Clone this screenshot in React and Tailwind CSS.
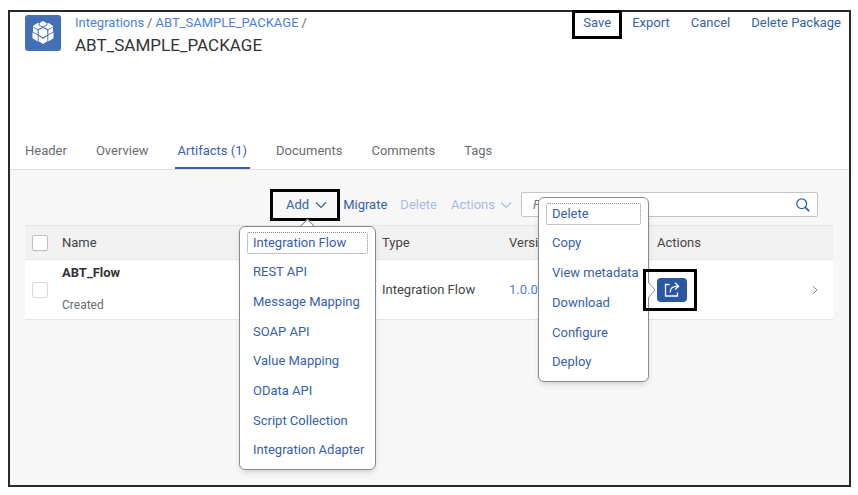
import React, { useState } from 'react';

const tabs = ['Header', 'Overview', 'Artifacts (1)', 'Documents', 'Comments', 'Tags'];

const addOptions = [
    'Integration Flow', 'REST API', 'Message Mapping', 'SOAP API',
    'Value Mapping', 'OData API', 'Script Collection', 'Integration Adapter'
];

const rowOptions = ['Delete', 'Copy', 'View metadata', 'Download', 'Configure', 'Deploy'];

const PackageLogo = () => (
    <svg viewBox="0 0 36 36" className="w-9 h-9 shrink-0" aria-hidden="true">
        <rect width="36" height="36" rx="3" fill="#4270b8" />
        <path
            d="M18 6.5 L21.5 8.5 L24 8.8 L27.5 11 V16.5 L28 18 V23 L24 25.6 L21.5 26.2 L18 28.5 L14.5 26.2 L12 25.6 L8 23 V18 L8.5 16.5 V11 L12 8.8 L14.5 8.5 Z"
            fill="#fff" stroke="#fff" strokeLinejoin="round"
        />
        <g fill="none" stroke="#4270b8" strokeLinejoin="round">
            <path d="M18 12.2 L22.8 14.8 V20.2 L18 23 L13.2 20.2 V14.8 Z" strokeWidth="1.1" />
            <path d="M14.2 8 V10.2 L18 12.2 L21.8 10.2 V8" strokeWidth="0.9" />
            <path d="M8.5 12.2 L13.2 14.8 M27.5 12.2 L22.8 14.8 M7.5 17.2 L13.2 19.8 M28.5 17.2 L22.8 19.8 M13.2 20.2 V26 M22.8 20.2 V26 M18 23 V24" strokeWidth="0.9" />
        </g>
    </svg>
);

const ChevronDown = () => (
    <svg viewBox="0 0 12 8" className="w-3 h-2" fill="none" stroke="currentColor" strokeWidth="1.2" aria-hidden="true">
        <path d="M1 1.5 L6 6.5 L11 1.5" />
    </svg>
);

const ShareIcon = () => (
    <svg viewBox="0 0 16 16" className="w-4 h-4" fill="none" stroke="currentColor" strokeWidth="1.3" aria-hidden="true">
        <path d="M5.5 2.5 H1.5 V14 H13.5 V10.5" />
        <path d="M6.2 10.5 C6 6.5 8.5 4.2 14 4.2 M11 0.8 L14.6 4.2 L11 7.6" />
    </svg>
);

const MenuItems = ({ items }) => (
    <>
        {items.map((item, i) => (
            <li key={item} role="none">
                <button
                    role="menuitem"
                    className={`block w-full h-[22px] px-[5px] text-left whitespace-nowrap rounded-xs border ${i === 0 ? 'border-[#8a8a8a] border-dotted' : 'border-transparent'}`}
                >
                    {item}
                </button>
            </li>
        ))}
    </>
);

const App = () => {
    const [activeTab, setActiveTab] = useState('Artifacts (1)');
    const [query, setQuery] = useState('');

    return (
        <div className="min-h-screen flex pt-[10px] pb-2 pl-2 pr-[7px] bg-white font-['Roboto',sans-serif] text-[13px] leading-4 text-[#444]">
            <div className="flex-1 min-w-0 flex flex-col border-2 border-[#2a2a2a]">
                {/* Package header */}
                <header className="bg-white border-b border-[#dedede]">
                    <div className="flex items-start pl-[15px] pr-2 pt-[3px]">
                        <PackageLogo />
                        <div className="pl-[14px]">
                            <nav aria-label="Breadcrumb" className="flex gap-[3px] text-[#666]">
                                <a href="#" className="text-[#4a7fe0]">Integrations</a>
                                <span>/</span>
                                <a href="#" className="text-[#4a7fe0]">ABT_SAMPLE_PACKAGE</a>
                                <span>/</span>
                            </nav>
                            <h1 className="mt-1 text-[17px] leading-5 text-[#333]">ABT_SAMPLE_PACKAGE</h1>
                        </div>
                        <div className="ml-auto flex gap-[21px] text-[#355fae]">
                            <div className="relative">
                                <button>Save</button>
                                <span className="absolute -left-[11px] -right-[11px] -top-[5px] -bottom-2 border-3 border-black pointer-events-none" />
                            </div>
                            <button>Export</button>
                            <button>Cancel</button>
                            <button>Delete Package</button>
                        </div>
                    </div>

                    <div role="tablist" className="flex gap-[23px] pl-3 mt-[88px]">
                        {tabs.map((tab) => (
                            <button
                                key={tab}
                                role="tab"
                                aria-selected={tab === activeTab}
                                onClick={() => setActiveTab(tab)}
                                className={`px-[3px] pb-2 border-b-2 ${tab === activeTab ? 'border-[#355fae] text-[#355fae]' : 'border-transparent text-[#6a6d70]'}`}
                            >
                                {tab}
                            </button>
                        ))}
                    </div>
                </header>

                {/* Artifacts */}
                <main className="flex-1 bg-[#f7f7f7] pl-[15px] pr-4">
                    <div className="flex items-center justify-end h-[55px] pt-[14px] pr-[15px] text-[#355fae]">
                        <div className="relative">
                            <button className="flex items-center gap-[6px] h-8 pl-[13px] pr-[10px] border-3 border-black" aria-haspopup="menu" aria-expanded="true">
                                Add <ChevronDown />
                            </button>
                            <div className="absolute z-10 top-[37px] -left-[31px] w-[137px]">
                                <span className="absolute -top-[5px] left-[63px] w-[11px] h-[11px] rotate-45 bg-white border border-[#8a8a8a]" />
                                <ul role="menu" className="relative flex flex-col justify-between h-[244px] px-[7px] pt-[5px] pb-[7px] bg-white rounded-md border border-[#8a8a8a] shadow-md">
                                    <MenuItems items={addOptions} />
                                </ul>
                            </div>
                        </div>
                        <button className="ml-[3px]">Migrate</button>
                        <button className="ml-[13px] text-[#a9bbdb]" disabled>Delete</button>
                        <button className="ml-[14px] flex items-center gap-[5px] text-[#a9bbdb]" disabled>
                            Actions <ChevronDown />
                        </button>
                        <label className="ml-[9px] flex items-center w-[297px] h-[25px] pl-[11px] pr-[7px] bg-white border border-[#c4c4c4] rounded-xs">
                            <input
                                type="text"
                                aria-label="Filter artifacts"
                                className="flex-1 min-w-0 outline-none placeholder:italic placeholder:text-[#777]"
                                placeholder="Filter"
                                value={query}
                                onChange={(e) => setQuery(e.target.value)}
                            />
                            <svg viewBox="0 0 14 14" className="w-[14px] h-[14px]" fill="none" stroke="currentColor" strokeWidth="1.3" aria-hidden="true">
                                <circle cx="5.7" cy="5.7" r="4.9" />
                                <path d="M9.3 9.3 L13.2 13.2" strokeWidth="1.8" />
                            </svg>
                        </label>
                    </div>

                    <table className="w-full table-fixed text-left border-collapse">
                        <colgroup>
                            <col className="w-[37px]" />
                            <col />
                            <col className="w-[127px]" />
                            <col className="w-[148px]" />
                            <col className="w-[157px]" />
                            <col className="w-[19px]" />
                        </colgroup>
                        <thead>
                            <tr className="h-[34px] bg-[#f1f1f1] border-y border-[#e4e4e4]">
                                <th className="pl-[7px]">
                                    <input type="checkbox" aria-label="Select all" className="block appearance-none w-4 h-4 bg-white border border-[#bfbfbf] rounded-xs" />
                                </th>
                                <th className="font-normal">Name</th>
                                <th className="font-normal">Type</th>
                                <th className="font-normal">Version</th>
                                <th className="font-normal">Actions</th>
                                <th></th>
                            </tr>
                        </thead>
                        <tbody>
                            <tr className="h-[60px] bg-white border-b border-[#e4e4e4]">
                                <td className="pl-[7px]">
                                    <input type="checkbox" aria-label="Select ABT_Flow" className="block appearance-none w-4 h-4 bg-white border border-[#d9d9d9] rounded-xs" />
                                </td>
                                <td className="pb-[2px]">
                                    <div className="font-bold text-[#333]">ABT_Flow</div>
                                    <div className="mt-4 text-xs leading-4 text-[#6a6d70]">Created</div>
                                </td>
                                <td>Integration Flow</td>
                                <td><a href="#" className="text-[#4a7fe0]">1.0.0</a></td>
                                <td>
                                    <div className="relative w-[30px] text-[#355fae]">
                                        <button aria-label="Artifact actions" className="flex items-center justify-center w-[30px] h-6 rounded-sm bg-[#2b55a5] text-white">
                                            <ShareIcon />
                                        </button>
                                        <div className="absolute z-10 -top-[81px] right-[38px] w-[111px]">
                                            <ul role="menu" className="flex flex-col justify-between h-[185px] px-[7px] pt-[5px] pb-[7px] bg-white rounded-md border border-[#8a8a8a] shadow-md">
                                                <MenuItems items={rowOptions} />
                                            </ul>
                                            <svg viewBox="0 0 8 16" className="absolute top-[85px] -right-[7px] w-2 h-4" aria-hidden="true">
                                                <path d="M0 0 L7 8 L0 16" fill="#fff" stroke="#8a8a8a" />
                                            </svg>
                                        </div>
                                        <span className="absolute z-20 -left-[14px] -right-[10px] -top-[9px] -bottom-[9px] border-3 border-black pointer-events-none" />
                                    </div>
                                </td>
                                <td>
                                    <svg viewBox="0 0 6 10" className="block -ml-[2px] w-[6px] h-[10px]" fill="none" stroke="#8a8a8a" aria-hidden="true">
                                        <path d="M1 1 L5 5 L1 9" />
                                    </svg>
                                </td>
                            </tr>
                        </tbody>
                    </table>
                </main>
            </div>
        </div>
    );
};

export default App;
